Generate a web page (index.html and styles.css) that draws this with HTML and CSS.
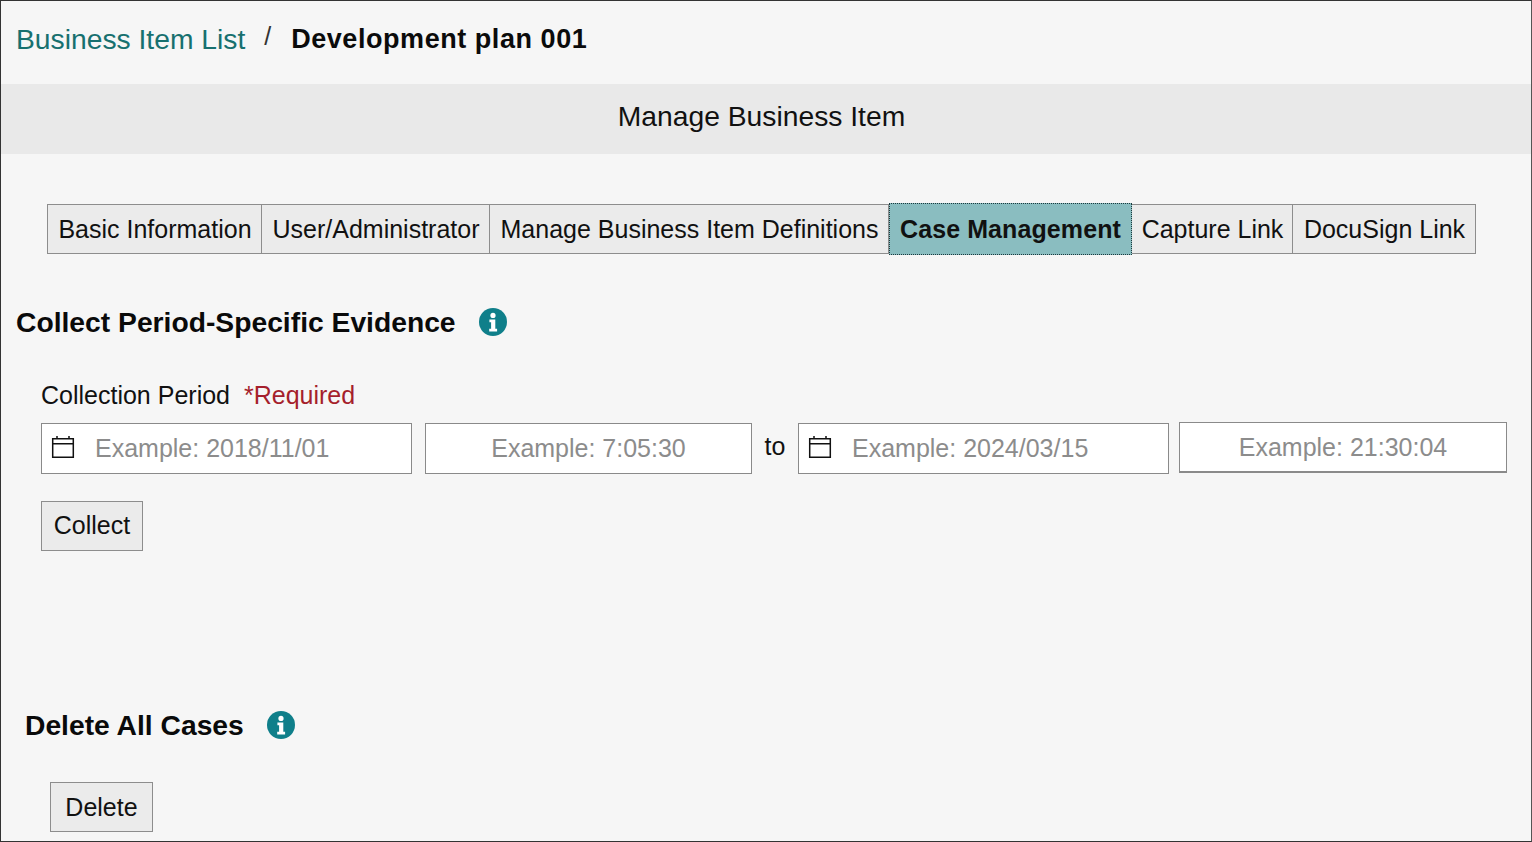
FILE: index.html
```html
<!DOCTYPE html>
<html lang="en">
<head>
<meta charset="utf-8">
<title>Manage Business Item</title>
<link rel="stylesheet" href="styles.css">
</head>
<body>
<div class="page">
  <nav class="crumbs">
    <a class="crumb-link" href="#">Business Item List</a>
    <span class="crumb-sep">/</span>
    <span class="crumb-current">Development plan 001</span>
  </nav>
  <header class="banner">Manage Business Item</header>
  <div class="tabs">
    <button class="tab tab-basic">Basic Information</button>
    <button class="tab tab-user">User/Administrator</button>
    <button class="tab tab-defs">Manage Business Item Definitions</button>
    <button class="tab tab-active">Case Management</button>
    <button class="tab tab-capture">Capture Link</button>
    <button class="tab tab-docu">DocuSign Link</button>
  </div>
  <section class="collect">
    <div class="section-head">
      <h2 class="section-title">Collect Period-Specific Evidence</h2>
      <svg class="info" viewBox="0 0 28 28" aria-hidden="true"><circle cx="14" cy="14" r="14" fill="#0f7f8a"/><circle cx="14" cy="7.4" r="2.6" fill="#fff"/><path d="M10.4 11.6h5.900v9.200h1.800v2.600h-7.900v-2.600h1.900v-6.600h-1.700z" fill="#fff"/></svg>
    </div>
    <div class="form-body">
      <div class="label-row"><span class="label">Collection Period</span><span class="required">*Required</span></div>
      <div class="period-row">
        <label class="date-field date-start">
          <svg class="cal" viewBox="0 0 24 24" aria-hidden="true"><path d="M1.700 3.700h20.600v18.600H1.700zM1.700 8.700h20.600M6 1v3.500M18 1v3.500" fill="none" stroke="#111" stroke-width="1.500"/></svg>
          <input class="date-input" type="text" placeholder="Example: 2018/11/01">
        </label>
        <input class="time-input time-start" type="text" placeholder="Example: 7:05:30">
        <span class="to">to</span>
        <label class="date-field date-end">
          <svg class="cal" viewBox="0 0 24 24" aria-hidden="true"><path d="M1.700 3.700h20.600v18.600H1.700zM1.700 8.700h20.600M6 1v3.500M18 1v3.500" fill="none" stroke="#111" stroke-width="1.500"/></svg>
          <input class="date-input" type="text" placeholder="Example: 2024/03/15">
        </label>
        <input class="time-input time-end" type="text" placeholder="Example: 21:30:04">
      </div>
      <button class="action action-collect">Collect</button>
    </div>
  </section>
  <section class="delete">
    <div class="section-head delete-head">
      <h2 class="section-title">Delete All Cases</h2>
      <svg class="info" viewBox="0 0 28 28" aria-hidden="true"><circle cx="14" cy="14" r="14" fill="#0f7f8a"/><circle cx="14" cy="7.4" r="2.6" fill="#fff"/><path d="M10.4 11.6h5.900v9.200h1.800v2.600h-7.900v-2.600h1.900v-6.600h-1.700z" fill="#fff"/></svg>
    </div>
    <button class="action action-delete">Delete</button>
  </section>
</div>
</body>
</html>
```
FILE: styles.css
```css
* { box-sizing: border-box; }
html, body { margin: 0; padding: 0; }
body { font-family: "Liberation Sans", Arial, sans-serif; color: #111; background: #f5f5f5; overflow: hidden; }
.page { width: 1532px; height: 842px; border: 1px solid #333; border-right-color: #555; background: #f6f6f6; overflow: hidden; }
.crumbs { height: 83px; padding: 21px 0 0 15px; display: flex; align-items: flex-start; font-size: 27px; line-height: 34px; }
.crumb-link { color: #17706f; text-decoration: none; font-size: 28.25px; }
.crumb-sep { margin-left: 19px; color: #333; font-size: 25px; line-height: 28px; }
.crumb-current { margin-left: 20px; font-weight: 700; letter-spacing: 0.55px; color: #0b0b0b; }
.banner { height: 70px; padding-right: 9px; background: #e9e9e9; text-align: center; font-size: 28.25px; line-height: 64px; }
.tabs { display: flex; align-items: center; margin: 50px 0 0 46px; height: 50px; }
.tab { height: 50px; padding: 0 0 0 1px; margin: 0; border: 1px solid #8d8d8d; border-left-width: 0; background: #ebebeb; font: 25px "Liberation Sans", Arial, sans-serif; color: #111; text-align: center; }
.tab-basic { width: 215px; border-left-width: 1px; }
.tab-user { width: 228px; }
.tab-defs { width: 399px; }
.tab-active { width: 243px; height: 52px; padding: 0; background: #8abdc0; font-weight: 700; letter-spacing: 0.1px; border: 1px dotted #1c3a3e; }
.tab-capture { width: 161px; border-left-width: 0; }
.tab-docu { width: 183px; }
.collect { height: 403px; }
.section-head { display: flex; align-items: center; gap: 23px; }
.collect .section-head { margin: 50px 0 0 15px; height: 36px; }
.section-title { margin: 0; font-size: 28.25px; line-height: 36px; font-weight: 700; color: #0a0a0a; }
.info { width: 28px; height: 28px; flex: none; margin-top: -1px; }
.form-body { margin: 39px 0 0 40px; }
.label-row { display: flex; gap: 14px; font-size: 25px; line-height: 32px; }
.required { color: #a51f2c; }
.period-row { display: flex; align-items: flex-start; margin-top: 12px; }
.date-field { display: flex; align-items: center; height: 51px; background: #fff; border: 1px solid #8a8a8a; padding-left: 9px; width: 371px; }
.cal { width: 24px; height: 24px; flex: none; margin: -3px 20px 0 0; }
.date-input { flex: 1; min-width: 0; border: 0; padding: 0; background: transparent; outline: 0; font: 25px "Liberation Sans", Arial, sans-serif; }
.time-input { height: 51px; padding: 0; background: #fff; border: 1px solid #8a8a8a; text-align: center; font: 25px "Liberation Sans", Arial, sans-serif; }
::placeholder { color: #8c8c8c; opacity: 1; }
.time-start { width: 327px; margin-left: 13px; }
.to { width: 46px; text-align: center; font-size: 25px; line-height: 47px; }
.date-end { margin-right: 10px; }
.time-end { width: 328px; margin-top: -1px; border-bottom-width: 2px; }
.action { display: block; height: 50px; padding: 0; background: #ebebeb; border: 1px solid #8d8d8d; font: 25px "Liberation Sans", Arial, sans-serif; color: #111; }
.action-collect { width: 102px; margin-top: 27px; padding-bottom: 2px; }
.delete-head { margin-left: 24px; height: 36px; }
.action-delete { width: 103px; margin: 39px 0 0 49px; }
```
